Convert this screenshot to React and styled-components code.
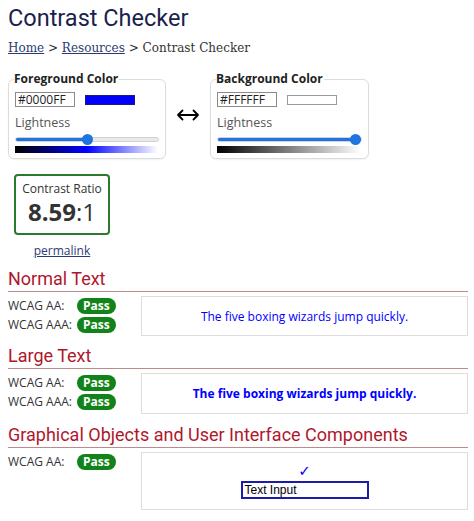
import React from "react";
import styled, { createGlobalStyle } from "styled-components";

const Global = createGlobalStyle`
  html, body { margin: 0; padding: 0; background: #fff; }
  body { font-family: "Open Sans", "Liberation Sans", sans-serif; font-size: 12px; color: #333; }
`;

const Page = styled.div`
  padding: 4px 6px 0 8px;
`;

const Title = styled.h1`
  margin: 0;
  font-family: Roboto, "Liberation Sans", sans-serif;
  font-weight: 400;
  font-size: 23.5px;
  line-height: 28px;
  color: #1b1f4e;
`;

const Crumbs = styled.nav`
  margin-top: 8px;
  font-family: "DejaVu Serif", "Liberation Serif", serif;
  font-size: 12px;
  line-height: 16px;
  color: #333;
  a { color: #2d3a70; text-decoration: underline; }
`;

const PickerRow = styled.div`
  display: flex;
  align-items: center;
  gap: 10px;
  margin-top: 15px;
`;

const Picker = styled.fieldset`
  box-sizing: border-box;
  width: ${(p) => p.$w}px;
  margin: 0;
  padding: 5px 6px 5px;
  border: 1px solid #dcdcdc;
  border-radius: 6px;
  box-shadow: 0 1px 2px rgba(0, 0, 0, 0.06);
  min-width: 0;
`;

const Legend = styled.legend`
  padding: 0 1px 0 0;
  margin-left: -1px;
  font-weight: 700;
  font-size: 12px;
  line-height: 16px;
  color: #222;
`;

const HexRow = styled.div`
  display: flex;
  align-items: center;
  gap: 10px;
`;

const HexInput = styled.input`
  box-sizing: border-box;
  width: 60px;
  height: 15px;
  margin: 0;
  padding: 0 2px;
  border: 1px solid #8a8a8a;
  font-family: "Open Sans", sans-serif;
  font-size: 12px;
  color: #222;
  outline: none;
`;

const Swatch = styled.div`
  box-sizing: border-box;
  width: 50px;
  height: 10px;
  background: ${(p) => p.$c};
  border: 1px solid ${(p) => p.$b};
`;

const SubLabel = styled.div`
  margin-top: 7px;
  font-size: 12.5px;
  line-height: 18px;
  color: #555;
`;

const Range = styled.input.attrs({ type: "range" })`
  -webkit-appearance: none;
  appearance: none;
  display: block;
  width: 100%;
  height: 10px;
  margin: 2px 0 0;
  background: transparent;
  &::-webkit-slider-runnable-track {
    box-sizing: border-box;
    height: 5px;
    border-radius: 3px;
    border: 1px solid #d2d2d2;
    background: linear-gradient(to right, #1f74e0 0 var(--fill), #e9e9e9 var(--fill) 100%);
  }
  &::-webkit-slider-thumb {
    -webkit-appearance: none;
    appearance: none;
    width: 11px;
    height: 11px;
    border-radius: 50%;
    background: #1f74e0;
    border: none;
    margin-top: -4px;
  }
`;

const Gradient = styled.div`
  height: 7px;
  margin-top: 2px;
  margin-right: 1px;
  background: ${(p) => p.$g};
`;

const Swap = styled.div`
  width: 24px;
  display: flex;
  justify-content: center;
`;

const RatioWrap = styled.div`
  width: 96px;
  margin: 15px 0 0 6px;
  text-align: center;
`;

const RatioBox = styled.div`
  box-sizing: border-box;
  height: 61px;
  border: 2px solid #2b7a2b;
  border-radius: 4px;
  padding-top: 5px;
  color: #333;
`;

const RatioLabel = styled.div`
  font-size: 12px;
  line-height: 16px;
`;

const RatioValue = styled.div`
  font-size: 24px;
  line-height: 30px;
  b { font-weight: 700; }
`;

const Permalink = styled.a`
  display: inline-block;
  margin-top: 7px;
  font-size: 12px;
  line-height: 17px;
  color: #2d3a78;
  text-decoration: underline;
`;

const Heading = styled.h2`
  margin: ${(p) => p.$mt}px 0 0;
  padding-bottom: 2px;
  font-family: Roboto, "Liberation Sans", sans-serif;
  font-weight: 400;
  font-size: 18px;
  line-height: 21px;
  color: #b0172d;
  border-bottom: 1px solid #bd8b8b;
`;

const Results = styled.div`
  display: grid;
  grid-template-columns: 133px 1fr;
  margin-top: 4px;
`;

const Checks = styled.div`
  display: flex;
  flex-direction: column;
`;

const CheckRow = styled.div`
  display: flex;
  align-items: center;
  height: 19px;
`;

const CheckLabel = styled.span`
  width: 69px;
  font-size: 12px;
  color: #333;
`;

const Badge = styled.span`
  display: inline-flex;
  align-items: center;
  height: 16px;
  padding: 0 6px;
  border-radius: 8px;
  background: #12831a;
  color: #fff;
  font-weight: 700;
  font-size: 12px;
`;

const Sample = styled.div`
  box-sizing: border-box;
  height: ${(p) => p.$h}px;
  border: 1px solid #dddddd;
  display: flex;
  flex-direction: column;
  align-items: center;
  justify-content: center;
  color: #0000ff;
  font-size: 12px;
  font-weight: ${(p) => (p.$bold ? 700 : 400)};
`;

const Tick = styled.div`
  color: #0000ff;
  font-family: "DejaVu Sans", sans-serif;
  font-size: 15px;
  line-height: 14px;
  margin-bottom: 3px;
`;

const DemoInput = styled.div`
  box-sizing: border-box;
  width: 128px;
  height: 18px;
  border: 2px solid #1c1ca8;
  padding: 0 2px;
  font-family: "Liberation Sans", Arial, sans-serif;
  font-size: 12px;
  line-height: 14px;
  color: #000;
`;

function Check({ label }) {
  return (
    <CheckRow>
      <CheckLabel>{label}</CheckLabel>
      <Badge>Pass</Badge>
    </CheckRow>
  );
}

function ColorPicker({ title, hex, swatch, border, fill, gradient, width }) {
  return (
    <Picker $w={width}>
      <Legend>{title}</Legend>
      <HexRow>
        <HexInput defaultValue={hex} />
        <Swatch $c={swatch} $b={border} />
      </HexRow>
      <SubLabel>Lightness</SubLabel>
      <Range min="0" max="100" defaultValue={fill} style={{ "--fill": fill + "%" }} />
      <Gradient $g={gradient} />
    </Picker>
  );
}

export default function App() {
  return (
    <Page>
      <Global />
      <Title>Contrast Checker</Title>
      <Crumbs>
        <a href="#">Home</a> &gt; <a href="#">Resources</a> &gt; Contrast Checker
      </Crumbs>
      <PickerRow>
        <ColorPicker
          width={158}
          title="Foreground Color"
          hex="#0000FF"
          swatch="#0000ff"
          border="#1a1a80"
          fill={50}
          gradient="linear-gradient(to right, #000 0%, #0000ff 50%, #ffffff 100%)"
        />
        <Swap>
          <svg width="24" height="12" viewBox="0 0 24 12" fill="none" stroke="#000" strokeWidth="1.8" strokeLinecap="round" strokeLinejoin="round">
            <path d="M2 6H22M6.5 1.5L2 6L6.5 10.5M17.5 1.5L22 6L17.5 10.5" />
          </svg>
        </Swap>
        <ColorPicker
          width={159}
          title="Background Color"
          hex="#FFFFFF"
          swatch="#ffffff"
          border="#9a9a9a"
          fill={100}
          gradient="linear-gradient(to right, #000 0%, #ffffff 100%)"
        />
      </PickerRow>
      <RatioWrap>
        <RatioBox>
          <RatioLabel>Contrast Ratio</RatioLabel>
          <RatioValue>
            <b>8.59</b>:1
          </RatioValue>
        </RatioBox>
        <Permalink href="#">permalink</Permalink>
      </RatioWrap>

      <Heading $mt={9}>Normal Text</Heading>
      <Results>
        <Checks>
          <Check label="WCAG AA:" />
          <Check label="WCAG AAA:" />
        </Checks>
        <Sample $h={40}>The five boxing wizards jump quickly.</Sample>
      </Results>

      <Heading $mt={9}>Large Text</Heading>
      <Results>
        <Checks>
          <Check label="WCAG AA:" />
          <Check label="WCAG AAA:" />
        </Checks>
        <Sample $h={41} $bold>The five boxing wizards jump quickly.</Sample>
      </Results>

      <Heading $mt={10}>Graphical Objects and User Interface Components</Heading>
      <Results>
        <Checks>
          <Check label="WCAG AA:" />
        </Checks>
        <Sample $h={58}>
          <Tick>✓</Tick>
          <DemoInput>Text Input</DemoInput>
        </Sample>
      </Results>
    </Page>
  );
}
